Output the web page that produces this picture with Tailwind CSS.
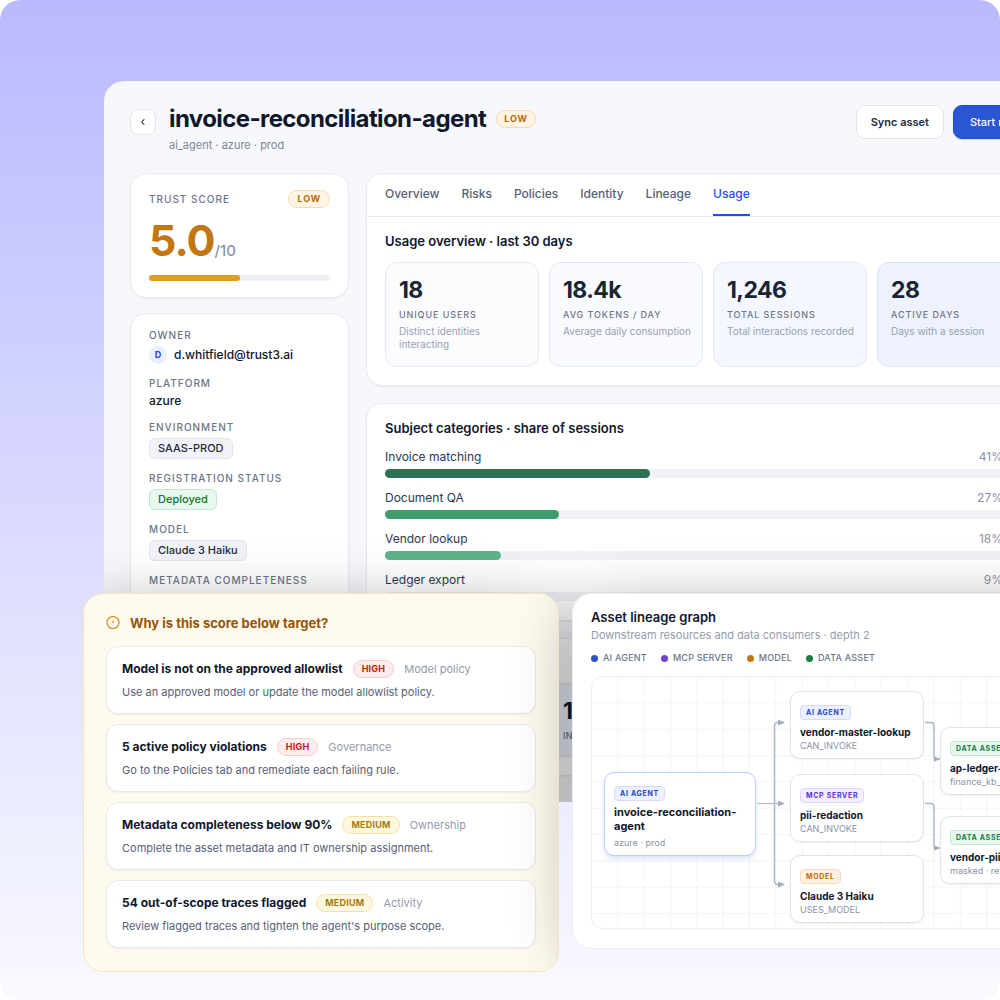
<!DOCTYPE html>
<html lang="en">
<head>
  <meta charset="UTF-8" />
  <meta name="viewport" content="width=device-width, initial-scale=1.0" />
  <title>invoice-reconciliation-agent</title>
  <script src="https://cdn.jsdelivr.net/npm/@tailwindcss/browser@4"></script>
</head>
<body class="bg-white font-['Inter',sans-serif] text-[#0f172a]">
  <div class="relative min-h-screen overflow-hidden rounded-[20px] bg-linear-to-b from-[#bab9ff] to-[#f9f9ff] pt-[81px]">

    <!-- Asset detail page -->
    <main class="relative ml-[104px] -mr-[76px] overflow-hidden rounded-tl-[20px] bg-[#f7f8fc] px-[26px] pt-6 pb-[26px]">
      <header class="flex items-start">
        <button aria-label="Back" class="mt-1 flex size-[26px] items-center justify-center rounded-lg border border-[#e2e5ee] bg-white">
          <svg class="size-3" viewBox="0 0 12 12" fill="none" stroke="#1e293b" stroke-width="1.1" stroke-linecap="round" stroke-linejoin="round"><path d="M7 3.5 4.7 6 7 8.5" /></svg>
        </button>
        <div class="ml-[13px]">
          <div class="flex items-center gap-2.5">
            <h1 class="text-2xl leading-7 font-bold tracking-tight">invoice-reconciliation-agent</h1>
            <span class="rounded-full border border-[#f8dcae] bg-[#fff4e5] px-[7px] text-[9px] leading-4 font-bold tracking-widest text-[#b9690b]">LOW</span>
          </div>
          <p class="mt-1 text-[11px] leading-4 text-[#7c8699]">ai_agent · azure · prod</p>
        </div>
        <div class="ml-auto flex gap-[9px]">
          <button class="h-[34px] rounded-[9px] border border-[#e0e4ee] bg-white px-3.5 text-[11px] font-semibold text-[#1e293b]">Sync asset</button>
          <button class="h-[34px] w-[97px] overflow-hidden rounded-[9px] border border-[#1d4ed8] bg-[#2a56d6] px-[15px] text-[11px] font-medium whitespace-nowrap text-white shadow-sm">Start review</button>
        </div>
      </header>

      <div class="mt-5 flex gap-[17px]">
        <aside class="flex w-[219px] shrink-0 flex-col gap-[15px]">
          <section class="rounded-2xl border border-[#e9ebf3] bg-white px-[18px] pt-4 pb-4 shadow-xs">
            <div class="flex items-center justify-between">
              <h2 class="text-[10px] font-medium tracking-widest text-[#6b7589]">TRUST SCORE</h2>
              <span class="rounded-full border border-[#f8dcae] bg-[#fff4e5] px-2 text-[9px] leading-4 font-bold tracking-widest text-[#b9690b]">LOW</span>
            </div>
            <p class="mt-3 flex items-baseline leading-10"><span class="text-[43px] font-bold tracking-tight text-[#c27810]">5.0</span><span class="text-[15px] font-medium text-[#8a93a6]">/10</span></p>
            <div class="mt-1 h-1.5 rounded-full bg-[#eff0f5]"><div class="h-1.5 rounded-full bg-[#e09d25]" style="width: 50%"></div></div>
          </section>

          <dl class="flex flex-col gap-3 rounded-2xl border border-[#e9ebf3] bg-white px-[18px] py-3.5 shadow-xs">
            <div>
              <dt class="text-[10px] leading-[14px] font-medium tracking-widest text-[#6b7589]">OWNER</dt>
              <dd class="mt-1 flex items-center gap-[7px] text-xs leading-[18px] font-medium"><span class="size-[18px] rounded-full bg-[#eaefff] text-center text-[9px] leading-[18px] font-bold text-[#2445d8]">D</span>d.whitfield@trust3.ai</dd>
            </div>
            <div>
              <dt class="text-[10px] leading-[14px] font-medium tracking-widest text-[#6b7589]">PLATFORM</dt>
              <dd class="mt-1 text-xs leading-[14px] font-medium">azure</dd>
            </div>
            <div>
              <dt class="text-[10px] leading-[14px] font-medium tracking-widest text-[#6b7589]">ENVIRONMENT</dt>
              <dd class="mt-1 w-fit rounded-md border border-[#e2e5ee] bg-[#f2f3f8] px-2 text-[11px] leading-[19px] font-medium text-[#1e293b]">SAAS-PROD</dd>
            </div>
            <div>
              <dt class="text-[10px] leading-[14px] font-medium tracking-widest text-[#6b7589]">REGISTRATION STATUS</dt>
              <dd class="mt-1 w-fit rounded-md border border-[#bdeacb] bg-[#e9f8ee] px-2 text-[11px] leading-[19px] font-medium text-[#15742f]">Deployed</dd>
            </div>
            <div>
              <dt class="text-[10px] leading-[14px] font-medium tracking-widest text-[#6b7589]">MODEL</dt>
              <dd class="mt-1 w-fit rounded-md border border-[#e2e5ee] bg-[#f2f3f8] px-2 text-[11px] leading-[19px] font-medium text-[#1e293b]">Claude 3 Haiku</dd>
            </div>
            <div>
              <dt class="text-[10px] leading-[14px] font-medium tracking-widest text-[#6b7589]">METADATA COMPLETENESS</dt>
              <dd class="mt-1 text-xs leading-[14px] font-medium">70%</dd>
            </div>
          </dl>
        </aside>

        <div class="flex min-w-0 flex-1 flex-col gap-[17px]">
          <section class="rounded-2xl border border-[#e9ebf3] bg-white pb-[18px] shadow-xs">
            <nav class="flex h-[43px] gap-[22px] border-b border-[#e6e9f2] px-[18px] text-xs leading-10 font-medium text-[#566176]">
              <a href="#">Overview</a>
              <a href="#">Risks</a>
              <a href="#">Policies</a>
              <a href="#">Identity</a>
              <a href="#">Lineage</a>
              <a href="#" class="border-b-2 border-[#1f50e6] text-[#1f50e6]">Usage</a>
            </nav>
            <div class="px-[18px] pt-[15px]">
              <h2 class="text-[13px] leading-[18px] font-semibold">Usage overview · last 30 days</h2>
              <div class="mt-3 grid grid-cols-4 gap-2.5">
                <div class="h-[105px] rounded-xl border border-[#e6e9f2] bg-[#fcfcfe] pt-3.5 pr-2 pl-[13px]">
                  <p class="text-[23px] leading-[26px] font-bold tracking-tight text-[#1b2433]">18</p>
                  <p class="mt-1.5 text-[9px] leading-3 font-medium tracking-widest text-[#6b7589]">UNIQUE USERS</p>
                  <p class="mt-1 text-[10px] leading-[13px] text-[#98a1b2]">Distinct identities interacting</p>
                </div>
                <div class="h-[105px] rounded-xl border border-[#e1e7f8] bg-[#f9fafe] pt-3.5 pr-2 pl-[13px]">
                  <p class="text-[23px] leading-[26px] font-bold tracking-tight text-[#1b2433]">18.4k</p>
                  <p class="mt-1.5 text-[9px] leading-3 font-medium tracking-widest text-[#6b7589]">AVG TOKENS / DAY</p>
                  <p class="mt-1 text-[10px] leading-[13px] text-[#98a1b2]">Average daily consumption</p>
                </div>
                <div class="h-[105px] rounded-xl border border-[#dfe7f8] bg-[#f4f7fe] pt-3.5 pr-2 pl-[13px]">
                  <p class="text-[23px] leading-[26px] font-bold tracking-tight text-[#1b2433]">1,246</p>
                  <p class="mt-1.5 text-[9px] leading-3 font-medium tracking-widest text-[#6b7589]">TOTAL SESSIONS</p>
                  <p class="mt-1 text-[10px] leading-[13px] text-[#98a1b2]">Total interactions recorded</p>
                </div>
                <div class="h-[105px] rounded-xl border border-[#d9e4f7] bg-[#edf2fc] pt-3.5 pr-2 pl-[13px]">
                  <p class="text-[23px] leading-[26px] font-bold tracking-tight text-[#1b2433]">28</p>
                  <p class="mt-1.5 text-[9px] leading-3 font-medium tracking-widest text-[#6b7589]">ACTIVE DAYS</p>
                  <p class="mt-1 text-[10px] leading-[13px] text-[#98a1b2]">Days with a session</p>
                </div>
              </div>
            </div>
          </section>

          <section class="rounded-2xl border border-[#e9ebf3] bg-white px-[18px] pt-[15px] pb-[19px] shadow-xs">
            <h2 class="text-[13px] leading-[18px] font-semibold">Subject categories · share of sessions</h2>
            <ul class="mt-3 flex flex-col gap-3 text-xs leading-4 text-[#2c3950]">
              <li>
                <div class="flex justify-between pr-7"><span>Invoice matching</span><span class="text-[#8a93a6]">41%</span></div>
                <div class="mt-1 h-[9px] rounded-full bg-[#f1f2f7]"><div class="h-[9px] rounded-full bg-[#2d7252]" style="width: 41%"></div></div>
              </li>
              <li>
                <div class="flex justify-between pr-7"><span>Document QA</span><span class="text-[#8a93a6]">27%</span></div>
                <div class="mt-1 h-[9px] rounded-full bg-[#f1f2f7]"><div class="h-[9px] rounded-full bg-[#3f9d6b]" style="width: 27%"></div></div>
              </li>
              <li>
                <div class="flex justify-between pr-7"><span>Vendor lookup</span><span class="text-[#8a93a6]">18%</span></div>
                <div class="mt-1 h-[9px] rounded-full bg-[#f1f2f7]"><div class="h-[9px] rounded-full bg-[#5fb389]" style="width: 18%"></div></div>
              </li>
              <li>
                <div class="flex justify-between pr-7"><span>Ledger export</span><span class="text-[#8a93a6]">9%</span></div>
                <div class="mt-1 h-[9px] rounded-full bg-[#f1f2f7]"></div>
              </li>
            </ul>
          </section>

          <section class="rounded-2xl border border-[#e9ebf3] bg-white px-[18px] pt-11 pb-[18px] shadow-xs">
            <div class="grid grid-cols-4 gap-2.5">
              <div class="col-start-2 h-[74px] rounded-xl border border-[#dfe7f8] bg-[#edf2fc] px-[13px] pt-3.5">
                <p class="text-[23px] leading-[26px] font-bold">1</p>
                <p class="mt-1.5 text-[9px] leading-3 font-medium tracking-wide text-[#6b7589]">IN</p>
              </div>
            </div>
          </section>
        </div>
      </div>

      <!-- Shade thrown on the page by the two floating cards -->
      <div class="pointer-events-none absolute top-[512px] -left-[21px] h-[379px] w-[475px] rounded-[20px] shadow-[0_12px_60px_rgba(0,0,0,0.32)]"></div>
      <div class="pointer-events-none absolute top-[512px] right-0 left-[468px] h-[355px] rounded-[20px] shadow-[0_12px_60px_rgba(0,0,0,0.32)]"></div>
    </main>

    <!-- Score explanation -->
    <section class="absolute top-[593px] left-[83px] w-[476px] overflow-hidden rounded-[20px] border border-[#f6e3bb] bg-[#fffaee] px-[22px] pt-[19px] pb-[23px]">
      <h2 class="flex items-center gap-2.5 text-[13px] leading-5 font-bold text-[#965508]">
        <svg class="size-3.5" viewBox="0 0 14 14" fill="none" stroke="#d08a1d" stroke-width="1.2" stroke-linecap="round"><circle cx="7" cy="6.5" r="6" /><path d="M7 4.8v1.7" /></svg>
        Why is this score below target?
      </h2>
      <ul class="mt-[13px] flex flex-col gap-2.5">
        <li class="rounded-xl border border-[#e8e8f0] bg-white px-[15px] py-[13px] shadow-xs">
          <div class="flex items-center gap-2.5"><h3 class="text-xs font-bold">Model is not on the approved allowlist</h3><span class="rounded-full border border-[#f8cfcf] bg-[#fdecec] px-2 text-[9px] leading-4 font-bold tracking-wide text-[#b81f12]">HIGH</span><span class="text-[11px] text-[#929bad]">Model policy</span></div>
          <p class="mt-1.5 text-[11px] leading-4 text-[#566176]">Use an approved model or update the model allowlist policy.</p>
        </li>
        <li class="rounded-xl border border-[#e8e8f0] bg-white px-[15px] py-[13px] shadow-xs">
          <div class="flex items-center gap-2.5"><h3 class="text-xs font-bold">5 active policy violations</h3><span class="rounded-full border border-[#f8cfcf] bg-[#fdecec] px-2 text-[9px] leading-4 font-bold tracking-wide text-[#b81f12]">HIGH</span><span class="text-[11px] text-[#929bad]">Governance</span></div>
          <p class="mt-1.5 text-[11px] leading-4 text-[#566176]">Go to the Policies tab and remediate each failing rule.</p>
        </li>
        <li class="rounded-xl border border-[#e8e8f0] bg-white px-[15px] py-[13px] shadow-xs">
          <div class="flex items-center gap-2.5"><h3 class="text-xs font-bold">Metadata completeness below 90%</h3><span class="rounded-full border border-[#f5e2a3] bg-[#fff8e0] px-2 text-[9px] leading-4 font-bold tracking-wide text-[#a87b0c]">MEDIUM</span><span class="text-[11px] text-[#929bad]">Ownership</span></div>
          <p class="mt-1.5 text-[11px] leading-4 text-[#566176]">Complete the asset metadata and IT ownership assignment.</p>
        </li>
        <li class="rounded-xl border border-[#e8e8f0] bg-white px-[15px] py-[13px] shadow-xs">
          <div class="flex items-center gap-2.5"><h3 class="text-xs font-bold">54 out-of-scope traces flagged</h3><span class="rounded-full border border-[#f5e2a3] bg-[#fff8e0] px-2 text-[9px] leading-4 font-bold tracking-wide text-[#a87b0c]">MEDIUM</span><span class="text-[11px] text-[#929bad]">Activity</span></div>
          <p class="mt-1.5 text-[11px] leading-4 text-[#566176]">Review flagged traces and tighten the agent's purpose scope.</p>
        </li>
      </ul>
      <div class="pointer-events-none absolute top-0 left-[488px] h-[355px] w-full rounded-[20px] shadow-[0_12px_60px_rgba(0,0,0,0.3)]"></div>
    </section>

    <!-- Lineage graph -->
    <section class="absolute top-[593px] -right-[76px] left-[572px] rounded-[20px] border border-[#eeeff6] bg-white px-[18px] pt-3.5 pb-[19px]">
      <h2 class="text-[13px] leading-[18px] font-semibold">Asset lineage graph</h2>
      <p class="mt-px text-[11px] leading-4 text-[#929bad]">Downstream resources and data consumers · depth 2</p>
      <ul class="mt-2 flex gap-3.5 text-[9px] leading-3.5 font-medium tracking-wide text-[#6b7589]">
        <li class="flex items-center gap-[5px]"><span class="size-[7px] rounded-full bg-[#2f4fc9]"></span>AI AGENT</li>
        <li class="flex items-center gap-[5px]"><span class="size-[7px] rounded-full bg-[#6f42d6]"></span>MCP SERVER</li>
        <li class="flex items-center gap-[5px]"><span class="size-[7px] rounded-full bg-[#c27810]"></span>MODEL</li>
        <li class="flex items-center gap-[5px]"><span class="size-[7px] rounded-full bg-[#15803d]"></span>DATA ASSET</li>
      </ul>

      <div class="relative mt-[11px] h-[253px] overflow-hidden rounded-xl border border-[#eceef5]">
        <svg class="absolute inset-0 size-full">
          <defs>
            <pattern id="grid" width="26.33" height="26.33" patternUnits="userSpaceOnUse"><path d="M26 0v26.33M0 26h26.33" stroke="#f1f2f8" fill="none" /></pattern>
            <marker id="arrow" markerUnits="userSpaceOnUse" markerWidth="7" markerHeight="6" refX="6" refY="3" orient="auto"><path d="M0 0 7 3 0 6Z" fill="#a3aec2" /></marker>
          </defs>
          <rect width="100%" height="100%" fill="url(#grid)" />
          <g fill="none" stroke="#adb7c9" stroke-width="1.5" marker-end="url(#arrow)">
            <path d="M165 126.500h27" stroke-width="1.200" />
            <path d="M182.500 126.500V49q0-3.500 3.500-3.500h6" />
            <path d="M182.500 126.500V204q0 3.500 3.500 3.500h6" />
            <path d="M333 45.500h5.500q3.500 0 3.500 3.500v30q0 3 3 3h2.500" />
            <path d="M333 126.500h5.500q3.500 0 3.500 3.500v38q0 3 3 3h2.500" />
          </g>
        </svg>

        <div class="absolute top-[95px] left-3 w-[152px] rounded-[10px] border border-[#bccdf8] bg-white px-[9px] pt-[13px] pb-1.5 shadow-md shadow-[#4f6fe0]/15">
          <span class="block w-fit rounded border border-[#d3dcfa] bg-[#edf1ff] px-[5px] text-[7px] leading-[13px] font-bold tracking-widest text-[#2445c4]">AI AGENT</span>
          <p class="mt-1 text-[11px] leading-[14px] font-bold">invoice-reconciliation-agent</p>
          <p class="mt-1 text-[9px] leading-3 text-[#8a93a6]">azure · prod</p>
        </div>

        <div class="absolute top-3.5 left-[198px] w-[134px] rounded-[10px] border border-[#e0e4ee] bg-white px-[9px] pt-[13px] pb-1.5 shadow-sm shadow-black/5">
          <span class="block w-fit rounded border border-[#d3dcfa] bg-[#edf1ff] px-[5px] text-[7px] leading-[13px] font-bold tracking-widest text-[#2445c4]">AI AGENT</span>
          <p class="mt-1 text-[10px] leading-4 font-bold whitespace-nowrap">vendor-master-lookup</p>
          <p class="text-[9px] leading-3 text-[#8a93a6]">CAN_INVOKE</p>
        </div>
        <div class="absolute top-[97px] left-[198px] w-[134px] rounded-[10px] border border-[#e0e4ee] bg-white px-[9px] pt-[13px] pb-1.5 shadow-sm shadow-black/5">
          <span class="block w-fit rounded border border-[#dfd3fb] bg-[#f4efff] px-[5px] text-[7px] leading-[13px] font-bold tracking-widest text-[#5b34cf]">MCP SERVER</span>
          <p class="mt-1 text-[10px] leading-4 font-bold whitespace-nowrap">pii-redaction</p>
          <p class="text-[9px] leading-3 text-[#8a93a6]">CAN_INVOKE</p>
        </div>
        <div class="absolute top-[178px] left-[198px] w-[134px] rounded-[10px] border border-[#e0e4ee] bg-white px-[9px] pt-[13px] pb-1.5 shadow-sm shadow-black/5">
          <span class="block w-fit rounded border border-[#f8dcb8] bg-[#fff2e2] px-[5px] text-[7px] leading-[13px] font-bold tracking-widest text-[#bf690a]">MODEL</span>
          <p class="mt-1 text-[10px] leading-4 font-bold whitespace-nowrap">Claude 3 Haiku</p>
          <p class="text-[9px] leading-3 text-[#8a93a6]">USES_MODEL</p>
        </div>

        <div class="absolute top-[50px] left-[348px] w-[134px] rounded-[10px] border border-[#e0e4ee] bg-white px-[9px] pt-[13px] pb-1.5 shadow-sm shadow-black/5">
          <span class="block w-fit rounded border border-[#bfe8cc] bg-[#e9f8ee] px-[5px] text-[7px] leading-[13px] font-bold tracking-widest text-[#15803d]">DATA ASSET</span>
          <p class="mt-1 text-[10px] leading-4 font-bold whitespace-nowrap">ap-ledger-kb</p>
          <p class="text-[9px] leading-3 text-[#8a93a6]">finance_kb_store</p>
        </div>
        <div class="absolute top-[139px] left-[348px] w-[134px] rounded-[10px] border border-[#e0e4ee] bg-white px-[9px] pt-[13px] pb-1.5 shadow-sm shadow-black/5">
          <span class="block w-fit rounded border border-[#bfe8cc] bg-[#e9f8ee] px-[5px] text-[7px] leading-[13px] font-bold tracking-widest text-[#15803d]">DATA ASSET</span>
          <p class="mt-1 text-[10px] leading-4 font-bold whitespace-nowrap">vendor-pii</p>
          <p class="text-[9px] leading-3 text-[#8a93a6]">masked · restricted</p>
        </div>
      </div>
    </section>
  </div>
</body>
</html>
